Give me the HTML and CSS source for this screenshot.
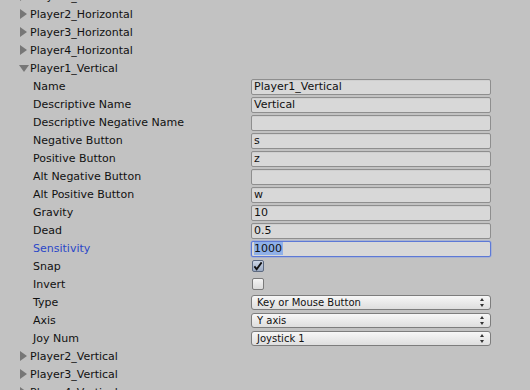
FILE: index.html
```html
<!DOCTYPE html>
<html>
<head>
<meta charset="utf-8">
<link rel="stylesheet" href="styles.css">
</head>
<body>
<div class="list">
  <div class="row fold"><span class="tri closed"></span><span class="name">Player1_Horizontal</span></div>
  <div class="row fold"><span class="tri closed"></span><span class="name">Player2_Horizontal</span></div>
  <div class="row fold"><span class="tri closed"></span><span class="name">Player3_Horizontal</span></div>
  <div class="row fold"><span class="tri closed"></span><span class="name">Player4_Horizontal</span></div>
  <div class="row fold"><span class="tri open"></span><span class="name">Player1_Vertical</span></div>

  <div class="row prop"><span class="label">Name</span><span class="field">Player1_Vertical</span></div>
  <div class="row prop"><span class="label">Descriptive Name</span><span class="field">Vertical</span></div>
  <div class="row prop"><span class="label">Descriptive Negative Name</span><span class="field"></span></div>
  <div class="row prop"><span class="label">Negative Button</span><span class="field">s</span></div>
  <div class="row prop"><span class="label">Positive Button</span><span class="field">z</span></div>
  <div class="row prop"><span class="label">Alt Negative Button</span><span class="field"></span></div>
  <div class="row prop"><span class="label">Alt Positive Button</span><span class="field">w</span></div>
  <div class="row prop"><span class="label">Gravity</span><span class="field">10</span></div>
  <div class="row prop"><span class="label">Dead</span><span class="field">0.5</span></div>
  <div class="row prop"><span class="label focus">Sensitivity</span><span class="field focused"><span class="sel">1000</span></span></div>
  <div class="row prop"><span class="label">Snap</span><span class="check checked"><svg width="11" height="10" viewBox="0 0 11 10"><path d="M1.5 5.5 L4 8.5 L9.5 1" fill="none" stroke="#111" stroke-width="2"/></svg></span></div>
  <div class="row prop"><span class="label">Invert</span><span class="check"></span></div>
  <div class="row prop"><span class="label">Type</span><span class="popup"><span>Key or Mouse Button</span><span class="arrows"></span></span></div>
  <div class="row prop"><span class="label">Axis</span><span class="popup"><span>Y axis</span><span class="arrows"></span></span></div>
  <div class="row prop"><span class="label">Joy Num</span><span class="popup"><span>Joystick 1</span><span class="arrows"></span></span></div>

  <div class="row fold"><span class="tri closed"></span><span class="name">Player2_Vertical</span></div>
  <div class="row fold"><span class="tri closed"></span><span class="name">Player3_Vertical</span></div>
  <div class="row fold"><span class="tri closed"></span><span class="name">Player4_Vertical</span></div>
</div>
</body>
</html>
```
FILE: styles.css
```css
html, body {
  margin: 0;
  padding: 0;
  background: #c2c2c2;
  overflow: hidden;
}
body {
  width: 530px;
  height: 390px;
  font-family: "DejaVu Sans", Verdana, sans-serif;
  font-size: 11px;
  color: #111;
}
.list {
  margin-top: -13px;
  display: flex;
  flex-direction: column;
}
.row {
  height: 18px;
  display: flex;
  align-items: center;
  white-space: nowrap;
}
.fold {
  padding-left: 19px;
}
.tri {
  width: 11px;
  height: 10px;
  display: inline-block;
  position: relative;
}
.tri.closed::before {
  content: "";
  position: absolute;
  left: 1px;
  top: 0;
  border-top: 5px solid transparent;
  border-bottom: 5px solid transparent;
  border-left: 7px solid #777;
}
.tri.open::before {
  content: "";
  position: absolute;
  left: 0;
  top: 2px;
  border-left: 5px solid transparent;
  border-right: 5px solid transparent;
  border-top: 7px solid #777;
}
.label {
  width: 251px;
  padding-left: 33px;
  box-sizing: border-box;
  flex: none;
}
.label.focus {
  color: #2a47c8;
}
.field {
  width: 240px;
  height: 16px;
  box-sizing: border-box;
  border: 1px solid #8e8e8e;
  border-radius: 2px;
  background: #d8d8d8;
  box-shadow: inset 0 1px 0 #cfcfcf;
  padding-left: 2px;
  display: flex;
  align-items: center;
  margin-top: 1px;
}
.field.focused {
  border-color: #5d79d6;
  box-shadow: 0 0 0 0.5px #8ea2e0;
}
.sel {
  background: #8fb0e8;
  padding: 0 1px 0 0;
  line-height: 13px;
}
.check {
  width: 12px;
  height: 12px;
  margin-left: 1px;
  box-sizing: border-box;
  border: 1px solid #7a7a7a;
  border-radius: 2px;
  background: linear-gradient(#f4f4f4, #dadada);
  display: flex;
  align-items: center;
  justify-content: center;
}
.check.checked {
  background: linear-gradient(#cdd6e6, #9aa9c2);
  border-color: #5d6a80;
}
.check svg {
  margin-top: -1px;
}
.popup {
  width: 240px;
  height: 15px;
  box-sizing: border-box;
  border: 1px solid #7d7d7d;
  border-radius: 3px;
  background: linear-gradient(#f7f7f7, #dedede);
  display: flex;
  align-items: center;
  justify-content: space-between;
  padding-left: 5px;
  padding-right: 5px;
  font-size: 10px;
  margin-top: 1px;
}
.arrows {
  width: 5px;
  height: 9px;
  position: relative;
}
.arrows::before {
  content: "";
  position: absolute;
  left: 0;
  top: 0;
  border-left: 2.5px solid transparent;
  border-right: 2.5px solid transparent;
  border-bottom: 3px solid #333;
}
.arrows::after {
  content: "";
  position: absolute;
  left: 0;
  bottom: 0;
  border-left: 2.5px solid transparent;
  border-right: 2.5px solid transparent;
  border-top: 3px solid #333;
}
```
